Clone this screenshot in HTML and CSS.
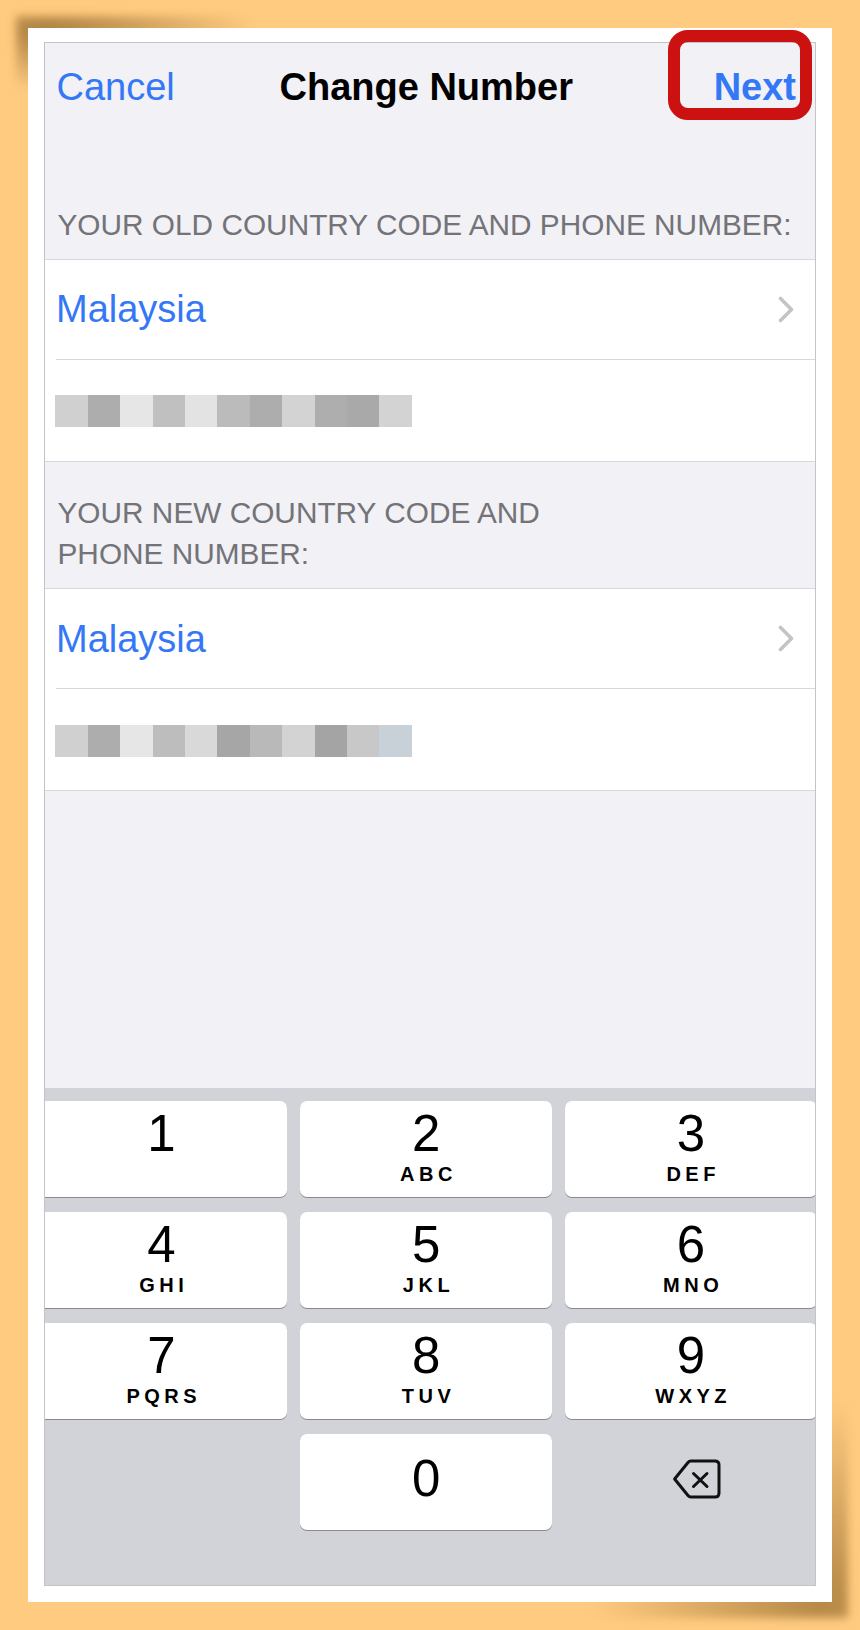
FILE: index.html
```html
<!DOCTYPE html>
<html lang="en">
<head>
<meta charset="utf-8">
<title>Change Number</title>
<link rel="stylesheet" href="styles.css">
</head>
<body>
<div class="page">
  <div class="card">
    <div class="screen">
      <div class="nav">
        <span class="nav-btn cancel">Cancel</span>
        <span class="nav-title">Change Number</span>
        <span class="nav-btn next">Next</span>
      </div>

      <div class="section-header">YOUR OLD COUNTRY CODE AND PHONE NUMBER:</div>
      <div class="group">
        <div class="row country">
          <span class="country-name">Malaysia</span>
          <svg class="chev" width="16" height="27" viewBox="0 0 16 27"><path d="M2.5 2.5 L13.5 13.5 L2.5 24.5" fill="none" stroke="#c4c4c7" stroke-width="3.6" stroke-linecap="round" stroke-linejoin="round"/></svg>
        </div>
        <div class="row phone">
          <div class="pixels">
            <span class="px c1"></span><span class="px c2"></span><span class="px c3"></span><span class="px c4"></span><span class="px c5"></span><span class="px c6"></span><span class="px c2"></span><span class="px c7"></span><span class="px c8"></span><span class="px c9"></span><span class="px c7"></span>
          </div>
        </div>
      </div>

      <div class="section-header">YOUR NEW COUNTRY CODE AND<br>PHONE NUMBER:</div>
      <div class="group">
        <div class="row country">
          <span class="country-name">Malaysia</span>
          <svg class="chev" width="16" height="27" viewBox="0 0 16 27"><path d="M2.5 2.5 L13.5 13.5 L2.5 24.5" fill="none" stroke="#c4c4c7" stroke-width="3.6" stroke-linecap="round" stroke-linejoin="round"/></svg>
        </div>
        <div class="row phone">
          <div class="pixels">
            <span class="px c1"></span><span class="px c2"></span><span class="px c3"></span><span class="px c10"></span><span class="px c11"></span><span class="px c12"></span><span class="px c13"></span><span class="px c7"></span><span class="px c14"></span><span class="px c15"></span><span class="px c16"></span>
          </div>
        </div>
      </div>

      <div class="spacer"></div>

      <div class="keyboard">
        <div class="keys">
          <div class="key"><span class="digit">1</span></div>
          <div class="key"><span class="digit">2</span><span class="letters">ABC</span></div>
          <div class="key"><span class="digit">3</span><span class="letters">DEF</span></div>
          <div class="key"><span class="digit">4</span><span class="letters">GHI</span></div>
          <div class="key"><span class="digit">5</span><span class="letters">JKL</span></div>
          <div class="key"><span class="digit">6</span><span class="letters">MNO</span></div>
          <div class="key"><span class="digit">7</span><span class="letters">PQRS</span></div>
          <div class="key"><span class="digit">8</span><span class="letters">TUV</span></div>
          <div class="key"><span class="digit">9</span><span class="letters">WXYZ</span></div>
          <div class="blank"></div>
          <div class="key zero"><span class="digit">0</span></div>
          <div class="delete">
            <svg width="49" height="40" viewBox="0 0 49 40"><path d="M2.6 20 L16.2 3.2 Q17.2 2 18.8 2 L43 2 Q47 2 47 6 L47 34 Q47 38 43 38 L18.8 38 Q17.2 38 16.2 36.8 Z" fill="none" stroke="#111" stroke-width="3" stroke-linejoin="round"/><path d="M21.5 14.5 L35 27.5 M35 14.5 L21.5 27.5" fill="none" stroke="#111" stroke-width="3" stroke-linecap="round"/></svg>
          </div>
        </div>
      </div>
    </div>
    <div class="highlight"></div>
  </div>
</div>
</body>
</html>
```

FILE: styles.css
```css
html, body {
  margin: 0;
  padding: 0;
}
body {
  background: #ffcb80;
  font-family: "Liberation Sans", Arial, sans-serif;
}
.page {
  padding: 28px;
}
.card {
  position: relative;
  width: 804px;
  height: 1574px;
  box-sizing: border-box;
  padding: 14px 16px 16px 16px;
  background: #ffffff;
}
.card::before {
  content: "";
  position: absolute;
  z-index: -1;
  left: -12px;
  top: -12px;
  width: 260px;
  height: 120px;
  background: radial-gradient(ellipse 210px 60px at 30px 14px, rgba(90, 55, 0, 0.5), rgba(90, 55, 0, 0) 100%);
  filter: blur(4px);
}
.card::after {
  content: "";
  position: absolute;
  z-index: -1;
  right: -16px;
  bottom: -16px;
  width: 280px;
  height: 280px;
  background: radial-gradient(ellipse 230px 200px at calc(100% - 26px) calc(100% - 18px), rgba(90, 55, 0, 0.45), rgba(90, 55, 0, 0) 100%);
  filter: blur(4px);
}
.screen {
  width: 772px;
  height: 1544px;
  box-sizing: border-box;
  border: 1px solid #c4c4c8;
  background: #f1f1f6;
  display: flex;
  flex-direction: column;
  overflow: hidden;
}
.nav {
  height: 131px;
  flex: none;
  box-sizing: border-box;
  padding: 21px 19px 0 11.5px;
  display: grid;
  grid-template-columns: 1fr auto 1fr;
  align-items: start;
  font-size: 38px;
  line-height: 46px;
}
.nav-btn {
  color: #3478f6;
}
.cancel {
  justify-self: start;
}
.next {
  justify-self: end;
  font-weight: bold;
}
.nav-title {
  font-weight: bold;
  color: #000;
}
.section-header {
  flex: none;
  padding: 30px 20px 13px 12.5px;
  font-size: 29.8px;
  line-height: 41.7px;
  color: #737378;
}
.group {
  flex: none;
  background: #ffffff;
  border-top: 1px solid #d8d8dc;
  border-bottom: 1px solid #d8d8dc;
  padding-left: 11px;
}
.row {
  display: flex;
  align-items: center;
}
.country {
  height: 99px;
  border-bottom: 1px solid #d8d8dc;
  justify-content: space-between;
  padding-right: 21px;
}
.country-name {
  font-size: 38px;
  line-height: 46px;
  color: #3478f6;
}
.chev {
  display: block;
}
.phone {
  height: 101px;
}
.pixels {
  display: grid;
  grid-template-columns: repeat(11, 32.4px);
  height: 32px;
  margin-left: -0.6px;
  margin-top: 2px;
}
.px { display: block; height: 32px; }
.c1 { background: #d0d0d0; }
.c2 { background: #adadad; }
.c3 { background: #e6e6e6; }
.c4 { background: #c0c0c0; }
.c5 { background: #e3e3e3; }
.c6 { background: #bbbbbb; }
.c7 { background: #d3d3d3; }
.c8 { background: #aeaeae; }
.c9 { background: #a9a9a9; }
.c10 { background: #bdbdbd; }
.c11 { background: #d9d9d9; }
.c12 { background: #a6a6a6; }
.c13 { background: #b9b9b9; }
.c14 { background: #a4a4a4; }
.c15 { background: #c8c8c8; }
.c16 { background: #c8d0d8; }
.spacer {
  flex: 1;
}
.keyboard {
  flex: none;
  height: 497px;
  background: #d1d3d9;
  overflow: hidden;
}
.keys {
  display: grid;
  grid-template-columns: repeat(3, 251.7px);
  grid-auto-rows: 96px;
  column-gap: 13px;
  row-gap: 15px;
  margin-left: -9.3px;
  padding-top: 12.7px;
}
.key {
  background: #ffffff;
  border-radius: 7px;
  box-shadow: 0 1px 0 #898a8d;
  display: flex;
  flex-direction: column;
  align-items: center;
  color: #000;
}
.digit {
  font-size: 51px;
  line-height: 51px;
  margin-top: 7.6px;
}
.letters {
  font-size: 20px;
  line-height: 20px;
  font-weight: bold;
  letter-spacing: 4.5px;
  padding-left: 4.5px;
  margin-top: 4.8px;
}
.zero .digit {
  margin-top: 19px;
}
.delete {
  display: flex;
  align-items: center;
  justify-content: center;
  padding-left: 12px;
  padding-bottom: 6px;
}
.delete svg {
  display: block;
}
.highlight {
  position: absolute;
  left: 640px;
  top: 2px;
  width: 144px;
  height: 90px;
  box-sizing: border-box;
  border: 12px solid #cc1111;
  border-radius: 20px;
}
```
